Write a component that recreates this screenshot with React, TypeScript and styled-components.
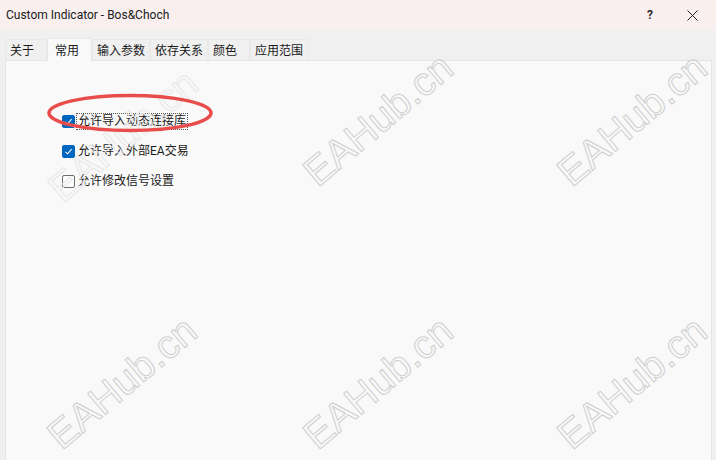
import React from "react";
import styled, { createGlobalStyle } from "styled-components";

const GlobalStyle = createGlobalStyle`
  html, body {
    margin: 0;
    padding: 0;
    background: #f0f0f0;
  }
  body {
    font-family: Roboto, "Noto Sans CJK SC", sans-serif;
    font-size: 12px;
    color: #1a1a1a;
  }
`;

const tabs = ["关于", "常用", "输入参数", "依存关系", "颜色", "应用范围"];

const options = [
  { label: "允许导入动态连接库", checked: true, focused: true },
  { label: "允许导入外部EA交易", checked: true, focused: false },
  { label: "允许修改信号设置", checked: false, focused: false },
];

const marks = [
  { x: 125, y: 138, faint: true },
  { x: 380, y: 122, faint: false },
  { x: 634, y: 122, faint: false },
  { x: 124, y: 385, faint: false },
  { x: 380, y: 385, faint: false },
  { x: 634, y: 385, faint: false },
];

const App = () => {
  return (
    <Window>
      <GlobalStyle />
      <TitleBar>
        <span className="title">Custom Indicator - Bos&amp;Choch</span>
        <div className="actions">
          <span className="help">?</span>
          <svg width="11" height="11" viewBox="0 0 11 11">
            <path d="M0.5 0.5 L10.5 10.5 M10.5 0.5 L0.5 10.5" stroke="#222" strokeWidth="1" fill="none" />
          </svg>
        </div>
      </TitleBar>
      <Body>
        <TabRow>
          {tabs.map((t) => (
            <Tab key={t} active={t === "常用"}>
              {t}
            </Tab>
          ))}
        </TabRow>
        <Panel>
          <OptionList>
            {options.map((o) => (
              <Option key={o.label}>
                <Box checked={o.checked}>
                  {o.checked && (
                    <svg width="9" height="9" viewBox="0 0 9 9">
                      <path d="M1.5 4.8 L3.6 6.8 L7.6 2.2" stroke="#fff" strokeWidth="1.1" fill="none" />
                    </svg>
                  )}
                </Box>
                <Label focused={o.focused}>{o.label}</Label>
              </Option>
            ))}
          </OptionList>
        </Panel>
      </Body>
      <Overlay width="716" height="460" viewBox="0 0 716 460">
        {marks.map((m, i) => (
          <text
            key={i}
            x={m.x}
            y={m.y}
            transform={`rotate(-40 ${m.x} ${m.y})`}
            textAnchor="middle"
            dominantBaseline="middle"
            fontFamily="'Liberation Sans', Arial, sans-serif"
            fontSize="40"
            fill="none"
            stroke={m.faint ? "#e8e8e8" : "#cfcfcf"}
            strokeWidth="1"
          >
            EAHub.cn
          </text>
        ))}
        <ellipse cx="130" cy="113" rx="81" ry="17.5" fill="none" stroke="#e94d4b" strokeWidth="3.5" />
      </Overlay>
    </Window>
  );
};

const Window = styled.div`
  position: relative;
  width: 716px;
  height: 460px;
  overflow: hidden;
  display: flex;
  flex-direction: column;
  background: #f0f0f0;
`;

const TitleBar = styled.div`
  height: 30px;
  flex: none;
  background: #f8efee;
  display: flex;
  align-items: center;
  justify-content: space-between;
  padding: 0 0 0 6px;

  .title {
    font-size: 12px;
    color: #1a1a1a;
  }

  .actions {
    display: flex;
    align-items: center;
    gap: 34px;
    padding-right: 18px;
  }

  .help {
    font-size: 12px;
    font-weight: 600;
  }
`;

const Body = styled.div`
  flex: 1;
  display: flex;
  flex-direction: column;
  padding: 8px 4px 0 5px;
`;

const TabRow = styled.div`
  display: flex;
  align-items: flex-end;
  height: 22px;
`;

const Tab = styled.div<{ active?: boolean }>`
  min-width: ${(p) => (p.active ? "45px" : "42px")};
  height: ${(p) => (p.active ? "23px" : "21px")};
  box-sizing: border-box;
  padding: 0 4px 1px ${(p) => (p.active ? "7px" : "4px")};
  display: flex;
  align-items: center;
  background: ${(p) => (p.active ? "#f9f9f9" : "#f0f0f0")};
  border: 1px solid ${(p) => (p.active ? "#e6e6e6" : "#e9e9e9")};
  border-bottom: none;
  margin-bottom: ${(p) => (p.active ? "-1px" : "0")};
  position: relative;
  z-index: ${(p) => (p.active ? 1 : 0)};
  font-size: 12px;
  color: #1a1a1a;
`;

const Panel = styled.div`
  flex: 1;
  background: #f9f9f9;
  border: 1px solid #e4e4e4;
  border-bottom: none;
  padding: 52px 0 0 56px;
`;

const OptionList = styled.div`
  display: flex;
  flex-direction: column;
  gap: 13px;
`;

const Option = styled.div`
  display: flex;
  align-items: center;
  gap: 1px;
  height: 17px;
`;

const Box = styled.div<{ checked?: boolean }>`
  width: 13px;
  height: 13px;
  box-sizing: border-box;
  border-radius: 2px;
  display: flex;
  align-items: center;
  justify-content: center;
  background: ${(p) => (p.checked ? "#0067c0" : "#fbfbfb")};
  border: 1px solid ${(p) => (p.checked ? "#0067c0" : "#6e6e6e")};
`;

const Label = styled.span<{ focused?: boolean }>`
  font-size: 12px;
  line-height: 15px;
  padding: 0 1px;
  border: 1px dotted ${(p) => (p.focused ? "#555" : "transparent")};
`;

const Overlay = styled.svg`
  position: absolute;
  left: 0;
  top: 0;
  pointer-events: none;
`;

export default App;
